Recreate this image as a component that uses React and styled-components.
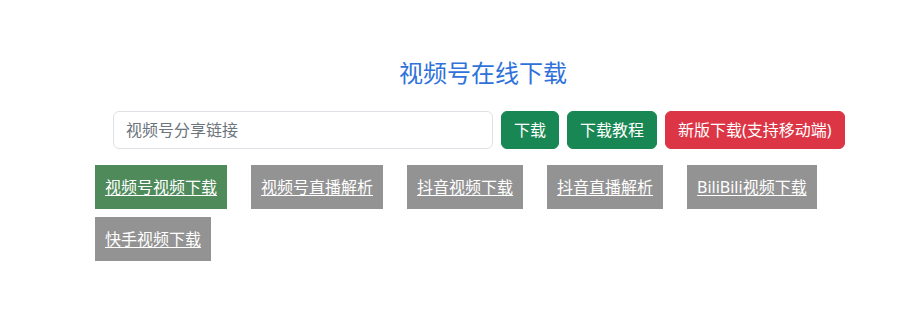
import React from "react";
import styled, { createGlobalStyle } from "styled-components";

const Global = createGlobalStyle`
  html, body { margin: 0; padding: 0; background: #fff; }
  body { font-family: "Noto Sans", "Noto Sans CJK SC", sans-serif; }
  * { box-sizing: border-box; }
`;

const Page = styled.div`
  width: 904px;
  padding: 58px 0 0 95px;
`;

const Container = styled.div`
  width: 760px;
  display: flex;
  flex-direction: column;
`;

const Title = styled.h1`
  margin: 0 0 24px;
  padding-left: 16px;
  text-align: center;
  font-size: 24px;
  line-height: 29px;
  font-weight: 400;
  color: #2f72da;
`;

const Form = styled.div`
  display: flex;
  gap: 8px;
  padding-left: 18px;
  margin-bottom: 16px;
  & > * { flex-shrink: 0; }
`;

const Input = styled.input`
  width: 380px;
  height: 38px;
  padding: 6px 12px;
  font-family: inherit;
  font-size: 16px;
  border: 1px solid #dee2e6;
  border-radius: 6px;
  color: #212529;
  outline: none;
  &::placeholder { color: #6c757d; }
`;

const Button = styled.button`
  height: 38px;
  padding: 6px 12px;
  font-family: inherit;
  font-size: 16px;
  line-height: 24px;
  color: #fff;
  border: 1px solid ${(p) => (p.$danger ? "#dc3545" : "#198754")};
  background: ${(p) => (p.$danger ? "#dc3545" : "#198754")};
  border-radius: 6px;
  white-space: nowrap;
`;

const Links = styled.div`
  display: flex;
  flex-wrap: wrap;
  gap: 8px 24px;
`;

const Tab = styled.a`
  display: block;
  padding: 10px;
  font-size: 16px;
  line-height: 24px;
  color: #fff;
  text-decoration: underline;
  text-underline-offset: 2px;
  background: ${(p) => (p.$active ? "#4e8a5a" : "#939393")};
`;

const tabs = [
  "视频号视频下载",
  "视频号直播解析",
  "抖音视频下载",
  "抖音直播解析",
  "BiliBili视频下载",
  "快手视频下载",
];

export default function App() {
  return (
    <Page>
      <Global />
      <Container>
        <Title>视频号在线下载</Title>
        <Form>
          <Input placeholder="视频号分享链接" />
          <Button>下载</Button>
          <Button>下载教程</Button>
          <Button $danger>新版下载(支持移动端)</Button>
        </Form>
        <Links>
          {tabs.map((t, i) => (
            <Tab key={t} href="#" $active={i === 0}>
              {t}
            </Tab>
          ))}
        </Links>
      </Container>
    </Page>
  );
}
